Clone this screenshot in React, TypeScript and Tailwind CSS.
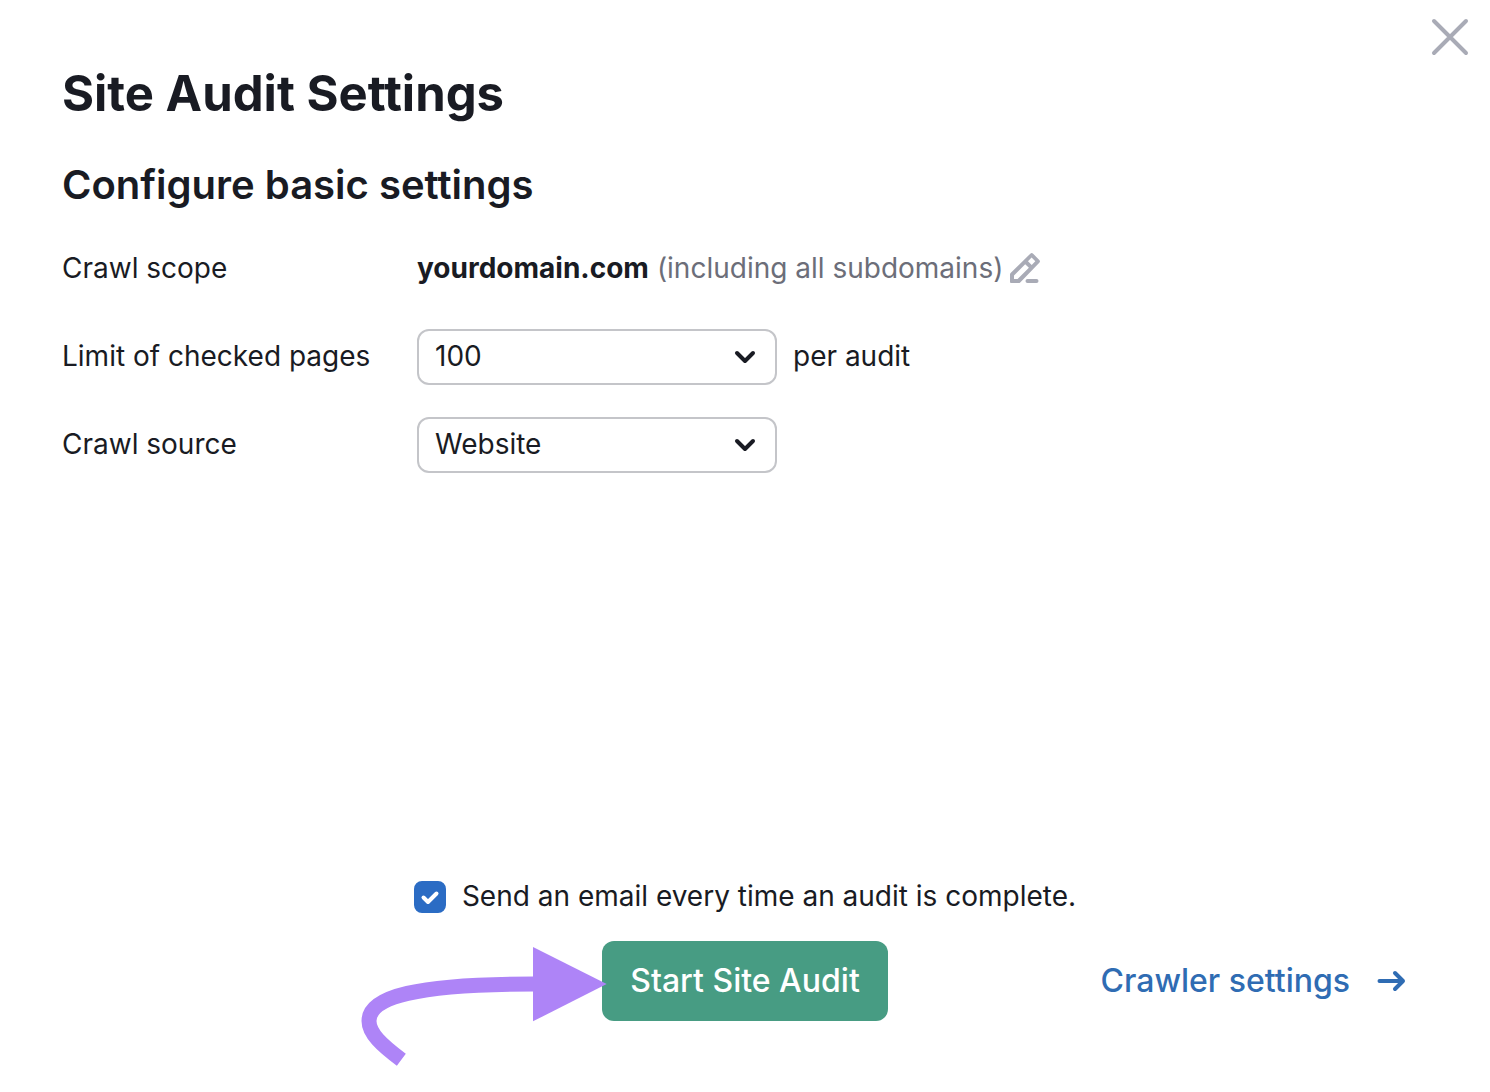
import { useState } from "react";

const selectClass =
  "h-14 w-full appearance-none rounded-xl border-2 border-[#c4c5c9] bg-white pl-4 pr-12 pb-0.5 text-[28px] leading-8 text-[#191b23]";

function Chevron() {
  return (
    <svg className="pointer-events-none absolute right-5 top-5 h-4 w-6" viewBox="0 0 24 16" fill="none" stroke="#191b23" strokeWidth="4" strokeLinecap="round" strokeLinejoin="round" aria-hidden="true">
      <path d="M4 4l8 8 8-8" />
    </svg>
  );
}

function Pencil() {
  return (
    <svg className="size-8" viewBox="0 0 32 32" fill="none" aria-hidden="true">
      <path
        fill="#a9abb6"
        fillRule="evenodd"
        d="M21.300 1.700a2 2 0 0 1 2.800 0l6.200 6.200a2 2 0 0 1 0 2.800L11.200 30.400a2 2 0 0 1-1.400.6H2a1 1 0 0 1-1-1v-7.700a2 2 0 0 1 .6-1.400zM22.600 5.600l-3.600 3.700 3.700 3.700 3.600-3.700zM16.200 12.200L5 23.500V27h3.600l11.300-11.200z"
      />
      <path d="M18.500 29h9" stroke="#a9abb6" strokeWidth="4" strokeLinecap="round" />
    </svg>
  );
}

function PointerArrow() {
  return (
    <svg className="pointer-events-none absolute -left-[252px] -top-[11px] h-[140px] w-[260px]" viewBox="0 0 780 420" fill="none" aria-hidden="true">
      <path d="M154 389C95 345 57 310 57 273C57 200 200 162 552 162" stroke="#ae84f7" strokeWidth="45" />
      <path d="M549 51L770 162L549 274z" fill="#ae84f7" />
    </svg>
  );
}

export default function App() {
  const [send, setSend] = useState(true);
  return (
    <main className="relative flex min-h-screen flex-col bg-white px-[62px] pb-[71px] pt-16 font-['Inter',sans-serif] text-[28px] leading-8 text-[#191b23]">
      <button type="button" aria-label="Close" className="absolute right-5 top-[17px]">
        <svg className="size-10" viewBox="0 0 40 40" fill="none" stroke="#a9abb6" strokeWidth="4" strokeLinecap="round" aria-hidden="true">
          <path d="M4 4l32 32M36 4L4 36" />
        </svg>
      </button>
      <h1 className="text-[49px] leading-[60px] font-bold">Site Audit Settings</h1>
      <h2 className="mt-9 text-[40px] leading-[50px] font-semibold">Configure basic settings</h2>
      <div className="mt-[31px] grid grid-cols-[355px_1fr] items-center gap-y-8">
        <span className="pb-0.5">Crawl scope</span>
        <div className="flex h-14 items-center pb-0.5">
          <strong className="font-bold">yourdomain.com</strong>
          <span className="ml-2 text-[#6c6e79]">(including all subdomains)</span>
          <button type="button" aria-label="Edit crawl scope" className="ml-1.5">
            <Pencil />
          </button>
        </div>
        <label htmlFor="limit" className="pb-0.5">Limit of checked pages</label>
        <div className="flex items-center gap-4">
          <div className="relative w-[360px]">
            <select id="limit" className={selectClass}><option>100</option><option>500</option></select>
            <Chevron />
          </div>
          <span className="pb-0.5">per audit</span>
        </div>
        <label htmlFor="source" className="pb-0.5">Crawl source</label>
        <div className="relative w-[360px]">
          <select id="source" className={selectClass}><option>Website</option><option>Sitemap</option></select>
          <Chevron />
        </div>
      </div>
      <footer className="mt-auto">
        <div className="flex items-center justify-center gap-4">
          <span className="relative flex">
            <input id="send" type="checkbox" checked={send} onChange={(e) => setSend(e.target.checked)} className="peer size-8 appearance-none rounded-lg border-2 border-[#2b6cc4] checked:bg-[#2b6cc4]" />
            <svg className="pointer-events-none absolute inset-0 hidden size-8 peer-checked:block" viewBox="0 0 32 32" fill="none" stroke="white" strokeWidth="4" strokeLinecap="round" strokeLinejoin="round" aria-hidden="true">
              <path d="M9.500 16.500l4.500 4.500 8.500-8.500" />
            </svg>
          </span>
          <label htmlFor="send" className="pb-0.5">Send an email every time an audit is complete.</label>
        </div>
        <div className="mt-[27px] grid grid-cols-[1fr_auto_1fr] items-center">
          <div className="relative col-start-2">
            <button type="button" className="h-20 rounded-xl bg-[#479c83] px-7 text-[32px] font-medium text-white">Start Site Audit</button>
            <PointerArrow />
          </div>
          <a href="#crawler" className="mr-[22px] flex items-center gap-6 justify-self-end text-[32px] font-medium text-[#2f6cb3]">
            Crawler settings
            <svg className="size-8" viewBox="0 0 32 32" fill="none" stroke="currentColor" strokeWidth="4" strokeLinecap="round" strokeLinejoin="round" aria-hidden="true">
              <path d="M5.500 16h23.500M21 8l8 8-8 8" />
            </svg>
          </a>
        </div>
      </footer>
    </main>
  );
}
